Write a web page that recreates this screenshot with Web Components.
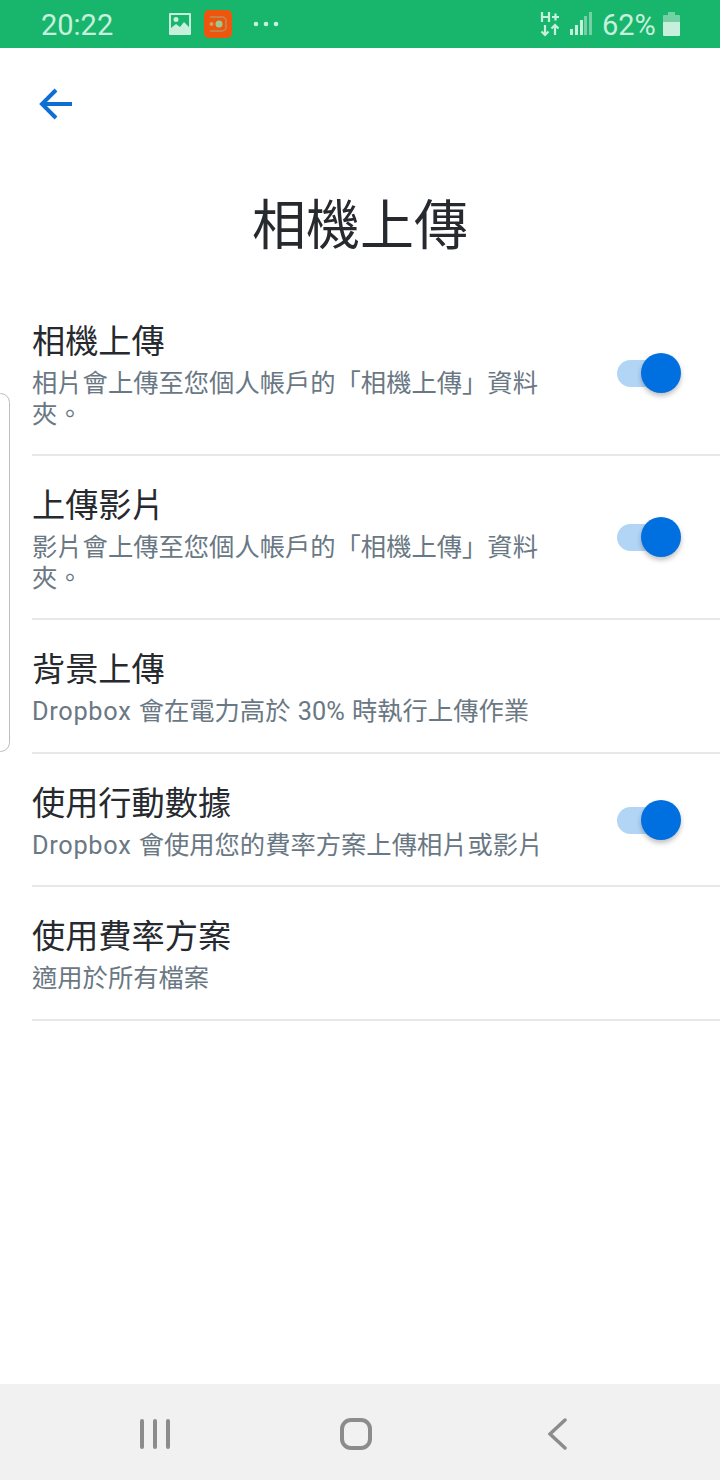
<!DOCTYPE html>
<html lang="zh-Hant">
<head>
<meta charset="utf-8">
<title>相機上傳</title>
<style>
   html, body { margin: 0; padding: 0; background: #fff; }
   body { width: 720px; height: 1480px; font-family: Roboto, "Noto Sans CJK TC", sans-serif; overflow: hidden; }
   app-screen { height: 1480px; }
   .brand { letter-spacing: .7px; }
</style>
</head>
<body>
<app-screen>
   <status-bar slot="top"></status-bar>
   <top-nav></top-nav>
   <page-title>相機上傳</page-title>
   <setting-row on height="164">
      <span slot="title">相機上傳</span>
      相片會上傳至您個人帳戶的「相機上傳」資料夾。
   </setting-row>
   <setting-row on height="164">
      <span slot="title">上傳影片</span>
      影片會上傳至您個人帳戶的「相機上傳」資料夾。
   </setting-row>
   <setting-row height="134">
      <span slot="title">背景上傳</span>
      <span class="brand">Dropbox</span> 會在電力高於 30% 時執行上傳作業
   </setting-row>
   <setting-row on height="133">
      <span slot="title">使用行動數據</span>
      <span class="brand">Dropbox</span> 會使用您的費率方案上傳相片或影片
   </setting-row>
   <setting-row height="134">
      <span slot="title">使用費率方案</span>
      適用於所有檔案
   </setting-row>
   <nav-bar slot="bottom"></nav-bar>
   <edge-handle slot="overlay"></edge-handle>
</app-screen>
<script>
class AppScreen extends HTMLElement {
   constructor() {
      super();
      this.attachShadow({mode: 'open'}).innerHTML = `
         <style>
            :host { display: flex; flex-direction: column; position: relative; width: 720px; }
            main { flex: 1; display: flex; flex-direction: column; }
         </style>
         <slot name="top"></slot>
         <main><slot></slot></main>
         <slot name="bottom"></slot>
         <slot name="overlay"></slot>`;
   }
}

class StatusBar extends HTMLElement {
   constructor() {
      super();
      this.attachShadow({mode: 'open'}).innerHTML = `
         <style>
            :host { display: flex; align-items: center; height: 48px; background: #18b66c; color: #c6efdc; font-family: Roboto, sans-serif; font-size: 29px; box-sizing: border-box; padding-left: 41px; }
            .time { width: 127px; padding-top: 2px; }
            .pct { width: 56px; padding-top: 2px; }
            svg { display: block; flex: none; }
            .blur { filter: blur(.6px); }
         </style>
         <span class="time">20:22</span>
         <svg width="24" height="24" viewBox="0 0 24 24"><path fill="#c6efdc" fill-rule="evenodd" d="M2 1h20a1 1 0 0 1 1 1v20a1 1 0 0 1-1 1H2a1 1 0 0 1-1-1V2a1 1 0 0 1 1-1zm1 2v13l5-4 4 3 4-5 5 5V3zM8 5a2.500 2.500 0 1 1 0 5 2.500 2.500 0 0 1 0-5z"/></svg>
         <svg class="blur" style="margin-left:12px" width="28" height="28" viewBox="0 0 28 28"><rect width="28" height="28" rx="5" fill="#ee5610"/><path d="M6 7h12a4 4 0 0 1 4 4v6a4 4 0 0 1-4 4H6" fill="none" stroke="#b9925a" stroke-width="1.500"/><circle cx="15" cy="14" r="3.500" fill="#9cc98f"/><circle cx="7.500" cy="14" r="2" fill="#c9a468"/></svg>
         <svg style="margin-left:21px" width="26" height="6" viewBox="0 0 26 6"><circle cx="3" cy="3" r="2.300" fill="#c6efdc"/><circle cx="13" cy="3" r="2.300" fill="#c6efdc"/><circle cx="23" cy="3" r="2.300" fill="#c6efdc"/></svg>
         <svg class="blur" style="margin-left:261px" width="20" height="26" viewBox="0 0 20 26"><g fill="none" stroke="#c6efdc" stroke-width="2.200"><path d="M2 1v10M9 1v10M2 6h7M12 6h7M15.500 2.500v7M5 14v10M1.500 20.500 5 24l3.500-3.500M15 24V14M11.500 17.500 15 14l3.500 3.500"/></g></svg>
         <svg class="blur" style="margin-left:10px" width="22" height="24" viewBox="0 0 22 24"><g fill="#c6efdc"><rect x="0" y="17" width="3" height="6"/><rect x="5" y="13" width="3" height="10"/><rect x="10" y="8" width="3" height="15"/></g><g fill="#74d1a5"><rect x="14" y="4" width="3" height="19"/><rect x="19" y="0" width="3" height="23"/></g></svg>
         <span class="pct" style="margin-left:10px">62%</span>
         <svg style="margin-left:5px" width="17" height="24" viewBox="0 0 17 24"><path fill="#74d1a5" d="M5 0h7v3h4a1 1 0 0 1 1 1v6H0V4a1 1 0 0 1 1-1h4z"/><path fill="#c6efdc" d="M0 10h17v13a1 1 0 0 1-1 1H1a1 1 0 0 1-1-1z"/></svg>`;
   }
}

class TopNav extends HTMLElement {
   constructor() {
      super();
      this.attachShadow({mode: 'open'}).innerHTML = `
         <style>
            :host { display: flex; align-items: center; height: 112px; padding-left: 39px; }
            svg { display: block; }
         </style>
         <svg width="33" height="32" viewBox="0 0 33 32" fill="none" stroke="#0f6fd0" stroke-width="4"><path d="M33 16H3M17 2 3 16l14 14"/></svg>`;
   }
}

class PageTitle extends HTMLElement {
   constructor() {
      super();
      this.attachShadow({mode: 'open'}).innerHTML = `
         <style>
            :host { display: block; height: 132px; text-align: center; font-size: 54px; line-height: 134px; color: #262a2e; }
         </style>
         <slot></slot>`;
   }
}

class SettingRow extends HTMLElement {
   constructor() {
      super();
      this.attachShadow({mode: 'open'}).innerHTML = `
         <style>
            :host { display: block; margin-left: 32px; box-sizing: border-box; border-bottom: 2px solid #e6e8ea; }
            .row { display: flex; align-items: center; height: 100%; box-sizing: border-box; }
            .text { width: 512px; align-self: flex-start; padding-top: 28px; }
            .title { font-size: 33.200px; line-height: 43px; height: 48px; color: #262a2e; }
            .sub { font-size: 25.300px; line-height: 31px; word-spacing: 1px; color: #6a7884; }
            toggle-switch { margin-left: 73px; }
         </style>
         <div class="row">
            <div class="text">
               <div class="title"><slot name="title"></slot></div>
               <div class="sub"><slot></slot></div>
            </div>
            ${this.hasAttribute('on') ? '<toggle-switch></toggle-switch>' : ''}
         </div>`;
      this.style.height = this.getAttribute('height') + 'px';
   }
}

class ToggleSwitch extends HTMLElement {
   constructor() {
      super();
      this.attachShadow({mode: 'open'}).innerHTML = `
         <style>
            :host { display: block; position: relative; width: 64px; height: 40px; flex: none; }
            .track { position: absolute; left: 0; top: 7px; width: 50px; height: 27px; border-radius: 14px; background: #b2d5f6; }
            .knob { position: absolute; right: 0; top: 0; width: 40px; height: 40px; border-radius: 50%; background: #0070e0; box-shadow: 0 3px 5px rgba(0,0,0,.25); }
         </style>
         <div class="track"></div><div class="knob"></div>`;
   }
}

class NavBar extends HTMLElement {
   constructor() {
      super();
      this.attachShadow({mode: 'open'}).innerHTML = `
         <style>
            :host { display: flex; align-items: center; height: 96px; box-sizing: border-box; padding: 4px 0 0 140px; background: #f1f1f1; }
            svg { display: block; flex: none; }
         </style>
         <svg width="30" height="30" viewBox="0 0 30 30" stroke="#8c8c8c" stroke-width="4" stroke-linecap="round" fill="none"><path d="M2 2v26M15 2v26M28 2v26"/></svg>
         <svg style="margin-left:170px" width="32" height="32" viewBox="0 0 32 32" fill="none" stroke="#8c8c8c" stroke-width="4"><rect x="2" y="2" width="28" height="28" rx="9"/></svg>
         <svg style="margin-left:176px" width="20" height="32" viewBox="0 0 20 32" fill="none" stroke="#8c8c8c" stroke-width="3.500" stroke-linecap="round"><path d="M17 2 2 16l15 14"/></svg>`;
   }
}

class EdgeHandle extends HTMLElement {
   constructor() {
      super();
      this.attachShadow({mode: 'open'}).innerHTML = `
         <style>
            :host { display: block; position: absolute; left: -9px; top: 393px; width: 19px; height: 359px; border: 1.500px solid #bdbdbd; border-radius: 10px; box-sizing: border-box; }
         </style>`;
   }
}

customElements.define('app-screen', AppScreen);
customElements.define('status-bar', StatusBar);
customElements.define('top-nav', TopNav);
customElements.define('page-title', PageTitle);
customElements.define('setting-row', SettingRow);
customElements.define('toggle-switch', ToggleSwitch);
customElements.define('nav-bar', NavBar);
customElements.define('edge-handle', EdgeHandle);
</script>
</body>
</html>
